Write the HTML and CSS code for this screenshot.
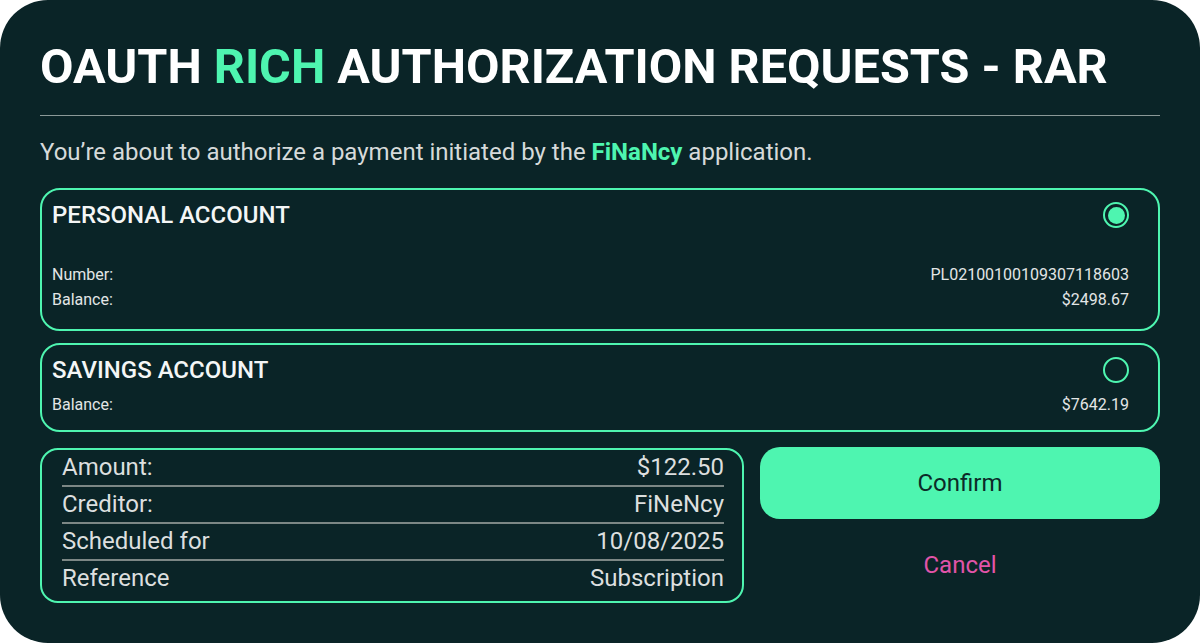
FILE: index.html
```html
<!DOCTYPE html>
<html lang="en">
<head>
<meta charset="utf-8">
<title>OAuth RAR</title>
<link rel="stylesheet" href="styles.css">
</head>
<body>
<main class="panel">
  <h1 class="title">OAUTH <span class="accent">RICH</span> AUTHORIZATION REQUESTS - RAR</h1>
  <hr class="divider">
  <p class="intro">You’re about to authorize a payment initiated by the <strong class="accent">FiNaNcy</strong> application.</p>

  <section class="account account--personal">
    <div class="account-head">
      <h2 class="account-name">PERSONAL ACCOUNT</h2>
      <span class="radio radio--on"></span>
    </div>
    <div class="account-details">
      <div class="kv"><span>Number:</span><span>PL02100100109307118603</span></div>
      <div class="kv"><span>Balance:</span><span>$2498.67</span></div>
    </div>
  </section>

  <section class="account account--savings">
    <div class="account-head">
      <h2 class="account-name">SAVINGS ACCOUNT</h2>
      <span class="radio"></span>
    </div>
    <div class="account-details">
      <div class="kv"><span>Balance:</span><span>$7642.19</span></div>
    </div>
  </section>

  <div class="bottom">
    <div class="summary">
      <div class="row"><span>Amount:</span><span>$122.50</span></div>
      <div class="row"><span>Creditor:</span><span>FiNeNcy</span></div>
      <div class="row"><span>Scheduled for</span><span>10/08/2025</span></div>
      <div class="row"><span>Reference</span><span>Subscription</span></div>
    </div>
    <div class="actions">
      <button class="btn-confirm" type="button">Confirm</button>
      <button class="btn-cancel" type="button">Cancel</button>
    </div>
  </div>
</main>
</body>
</html>
```

FILE: styles.css
```css
html, body {
  margin: 0;
  padding: 0;
  background: #ffffff;
}

body {
  font-family: Roboto, "Noto Sans", "Liberation Sans", sans-serif;
}

.panel {
  box-sizing: border-box;
  width: 1200px;
  height: 643px;
  background: #0a2427;
  border-radius: 48px;
  padding: 43px 40px 0 40px;
  display: flex;
  flex-direction: column;
  color: #dcdfdf;
}

.accent {
  color: #4ef5b0;
}

.title {
  margin: 0;
  font-size: 48.6px;
  line-height: 48px;
  font-weight: 700;
  color: #ffffff;
  letter-spacing: 0;
}

.divider {
  margin: 24px 0 0 0;
  border: 0;
  height: 1px;
  background: #8b9998;
}

.intro {
  margin: 21px 0 0 0;
  font-size: 24px;
  line-height: 30px;
  color: #d6dada;
}

.intro strong {
  font-weight: 700;
}

.account {
  box-sizing: border-box;
  border: 2px solid #4ef5b0;
  border-radius: 20px;
  padding: 11px 29px 13px 10px;
  display: flex;
  flex-direction: column;
}

.account--personal {
  margin-top: 21px;
  padding-bottom: 17px;
}

.account--savings {
  margin-top: 12px;
}

.account-head {
  display: flex;
  align-items: center;
  justify-content: space-between;
  height: 28px;
}

.account-name {
  margin: 0;
  font-size: 24px;
  line-height: 28px;
  font-weight: 500;
  color: #f4f6f6;
}

.radio {
  box-sizing: border-box;
  width: 26px;
  height: 26px;
  border-radius: 50%;
  border: 2px solid #4ef5b0;
  display: flex;
  align-items: center;
  justify-content: center;
}

.radio--on::after {
  content: "";
  width: 17px;
  height: 17px;
  border-radius: 50%;
  background: #4ef5b0;
}

.account-details {
  margin-top: 8px;
}

.account--personal .account-details {
  margin-top: 33px;
}

.kv {
  display: flex;
  justify-content: space-between;
  font-size: 16px;
  line-height: 25px;
  color: #e3e6e6;
}

.bottom {
  margin-top: 16px;
  display: flex;
  gap: 16px;
  align-items: flex-start;
}

.summary {
  box-sizing: border-box;
  width: 704px;
  border: 2px solid #4ef5b0;
  border-radius: 18px;
  padding: 0 18px 5px 20px;
}

.row {
  display: flex;
  justify-content: space-between;
  font-size: 24px;
  line-height: 35px;
  color: #dcdfdf;
  border-bottom: 2px solid #7c8785;
}

.row:last-child {
  border-bottom: 0;
}

.actions {
  flex: 1;
  display: flex;
  flex-direction: column;
  align-items: stretch;
}

.btn-confirm {
  height: 72px;
  margin-top: -1px;
  border: 0;
  border-radius: 20px;
  background: #4ef5b0;
  color: #0c2a28;
  font-family: inherit;
  font-size: 24px;
  cursor: pointer;
}

.btn-cancel {
  margin-top: 28px;
  height: 36px;
  border: 0;
  background: transparent;
  color: #e154a9;
  font-family: inherit;
  font-size: 24px;
  line-height: 36px;
  padding: 0;
  cursor: pointer;
}
```
